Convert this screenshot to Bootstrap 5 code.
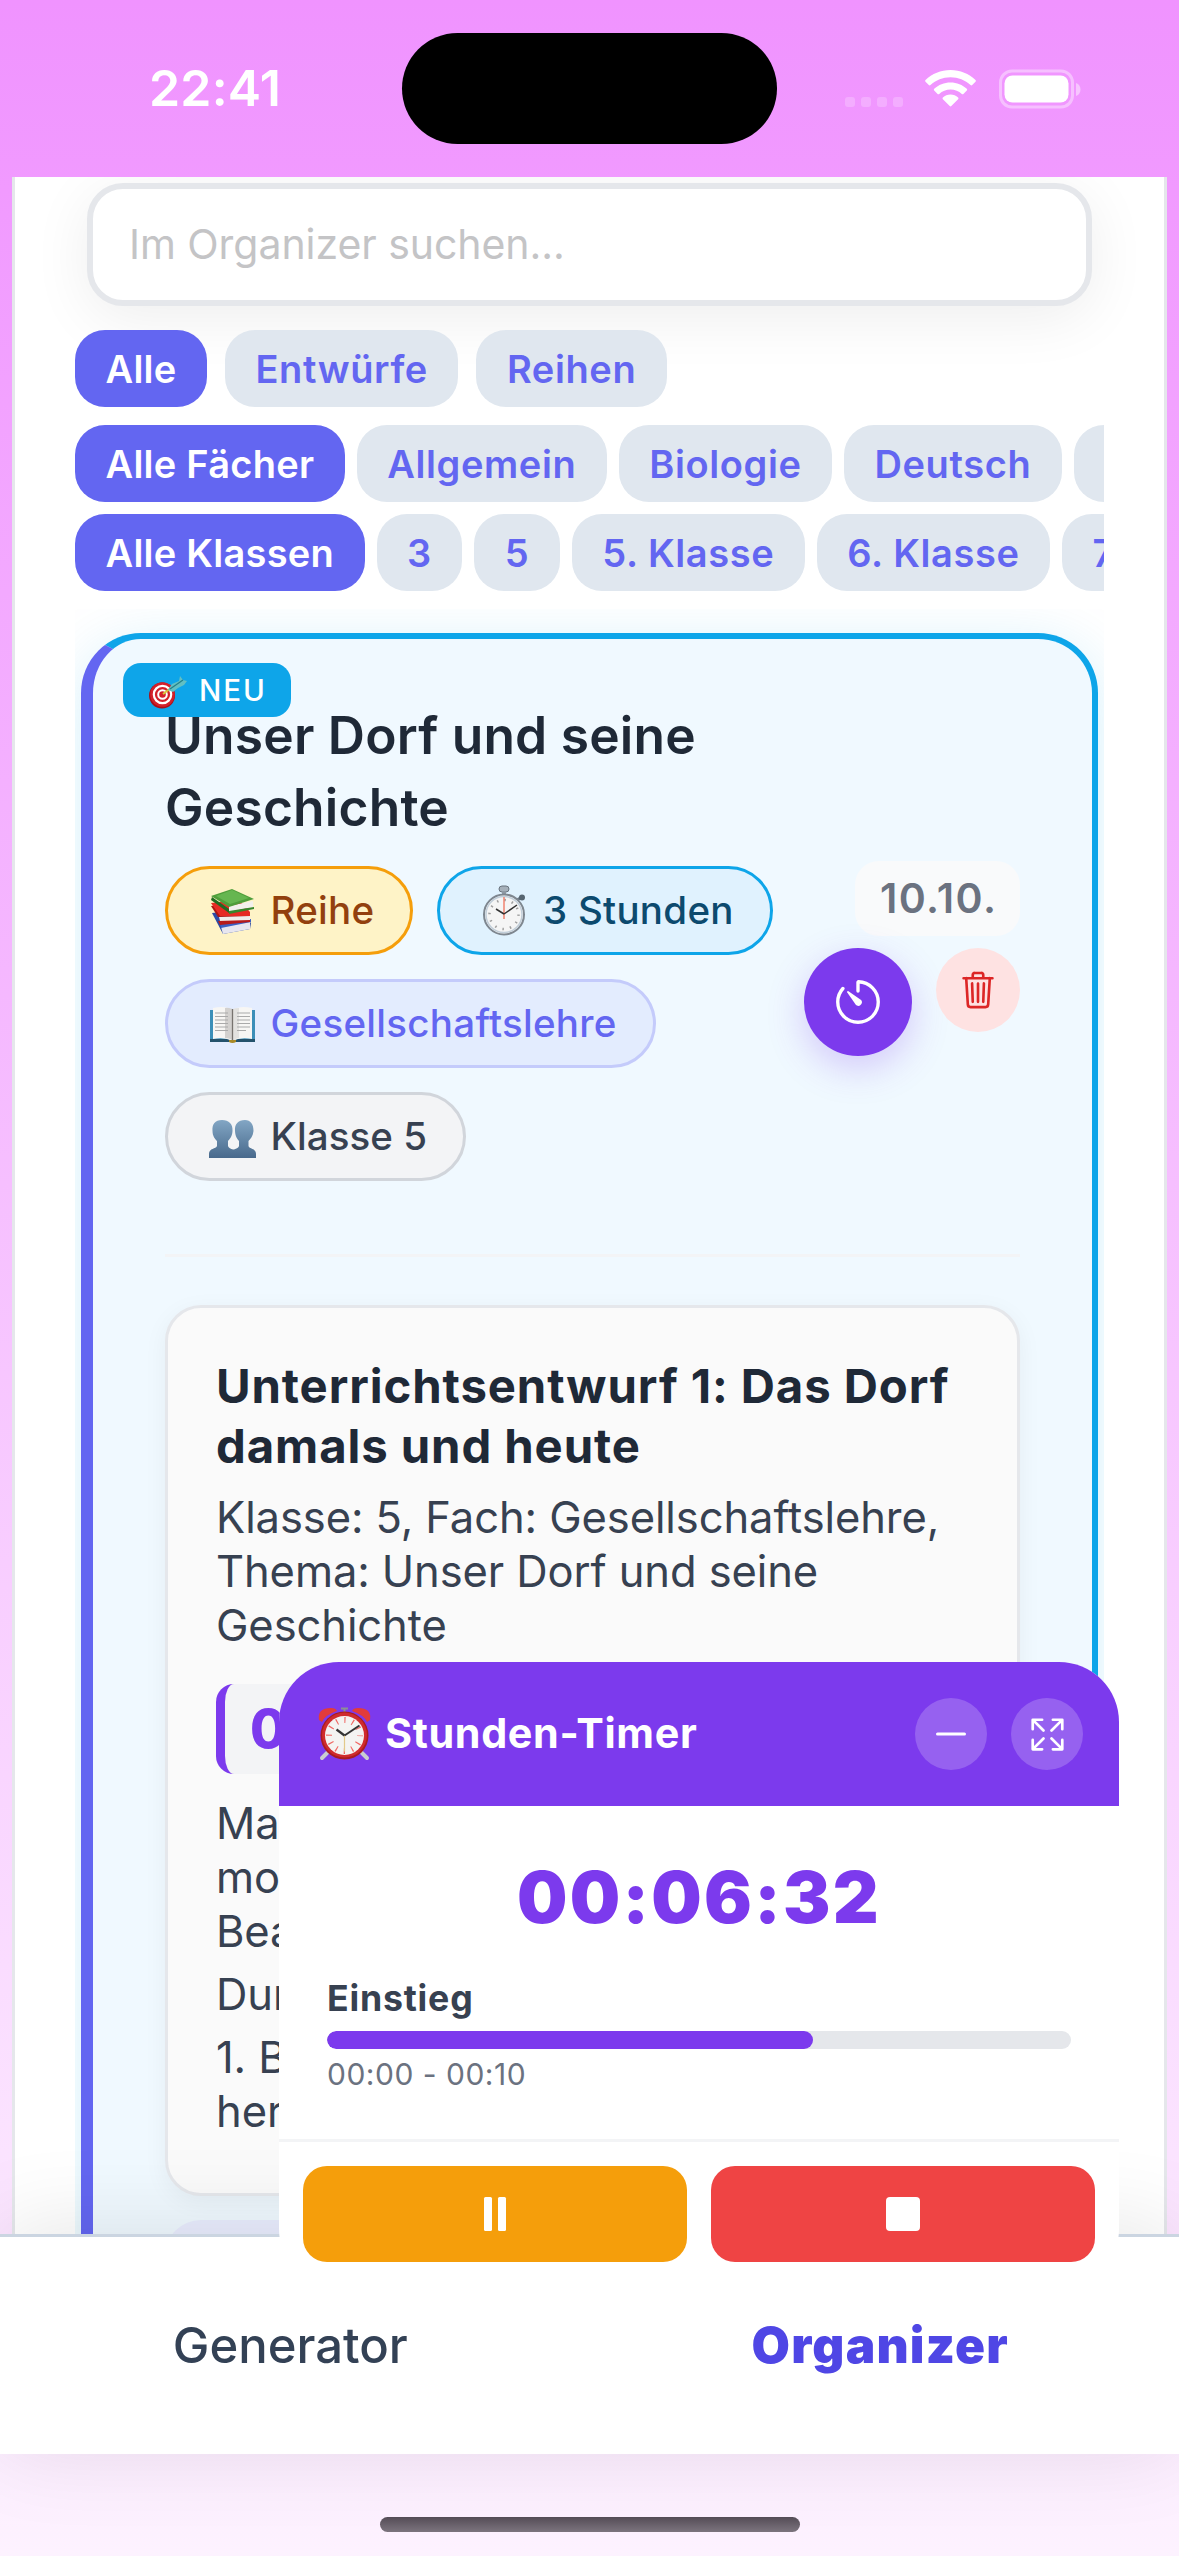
<!DOCTYPE html>
<html lang="de">
<head>
<meta charset="utf-8">
<meta name="viewport" content="width=device-width, initial-scale=1">
<title>Organizer</title>
<link rel="stylesheet" href="https://cdn.jsdelivr.net/npm/bootstrap@5.3.0/dist/css/bootstrap.min.css">
<style>
  html, body { height: 2556px; overflow: hidden; }
  body { font-family: Inter, "Liberation Sans", sans-serif; color: #374151; line-height: 1;
         background: linear-gradient(180deg, #f093ff 0%, #fdf2ff 100%); white-space: nowrap; }
  svg { display: block; flex: none; overflow: visible; }

  /* status bar */
  .status { height: 177px; padding: 0 98px 0 149px; }
  .clock { font-size: 50px; font-weight: 600; letter-spacing: .2px; width: 253px; line-height: 176px; }
  .island { width: 375px; height: 111px; border-radius: 56px; margin-top: 33px; }
  .signals { height: 177px; }
  .dots { gap: 6px; padding-top: 26px; margin-left: 1px; }
  .dot { width: 10px; height: 10px; border-radius: 3px; background: rgba(255,255,255,.22); }
  .wifi { margin-left: 22px; }
  .battery { margin-left: 23px; }

  /* page panel */
  .panel { margin: 0 12px; height: 2057px; border: 3px solid #e5e7eb; border-width: 0 3px; padding: 6px 60px 0; overflow: hidden; }
  .search { height: 123px; margin: 0 12px; border: 6px solid #e5e7eb; border-radius: 36px; padding: 0 36px; background: #fff;
            font-size: 41px; letter-spacing: -.05px; line-height: 111px; color: #c4c4c6; box-shadow: 0 12px 60px rgba(0,0,0,.07); }
  .chips { height: 77px; overflow: hidden; gap: 12px; margin-top: 12px; }
  .chips-type { gap: 18px; margin-top: 24px; }
  .chips-subject { margin-top: 18px; }
  .chip { flex: none; height: 77px; border-radius: 30px; padding: 0 30.5px; background: #e0e7ef; color: #6366f1;
          font-size: 38px; font-weight: 600; letter-spacing: .6px; line-height: 78px; }
  .chip.on { background: #6366f1; color: #fff; letter-spacing: .25px; }

  /* organizer list */
  .feed { margin-top: 18px; padding: 24px 6px 0; height: 1700px; overflow: hidden; }
  .entry { position: relative; height: 1900px; background: #f0f9ff; border: 6px solid #0ea5e9; border-left: 12px solid #6366f1;
           border-radius: 60px; padding: 60px 72px 0; box-shadow: 0 12px 60px rgba(14,165,233,.17); }
  .flag { position: absolute; left: 30px; top: 24px; width: 168px; height: 54px; border-radius: 18px; background: #0ea5e9; color: #fff;
          font-size: 29.5px; font-weight: 500; letter-spacing: 2px; line-height: 54px; padding-left: 26px; gap: 11px; }
  .flag svg { margin-top: 5px; }
  .entry-title { font-size: 51.5px; font-weight: 600; letter-spacing: .2px; line-height: 72px; color: #1f2937; width: 610px; white-space: normal; }
  .pills { width: 630px; margin-top: 23px; }
  .pill { height: 89px; border: 3px solid; border-radius: 45px; padding: 0 36px 0 37px; font-size: 38.5px; font-weight: 500; letter-spacing: .28px; }
  .pill svg { margin-right: 10px; margin-left: -.5px; }
  .p-reihe { background: #fef3c7; border-color: #f59e0b; color: #92400e; }
  .p-zeit { background: #e0f2fe; border-color: #0ea5e9; color: #0c4a6e; }
  .p-fach { background: #e3ecfe; border-color: #c4cbfb; color: #6366f1; }
  .p-klasse { background: #f3f4f6; border-color: #d1d5db; color: #374151; letter-spacing: .05px; }
  .side { width: 225px; padding-top: 162px; }
  .date { width: 165px; height: 75px; border-radius: 24px; background: #f9fafb; color: #6b7280; font-size: 41px; font-weight: 600;
          letter-spacing: 1.4px; line-height: 75px; padding-left: 25px; margin-bottom: 12px; }
  .b-timer { width: 108px; height: 108px; background: #7c3aed; box-shadow: 0 12px 36px rgba(124,58,237,.25); }
  .b-trash { width: 84px; height: 84px; background: #fee2e2; }
  .rule { height: 3px; background: #f3f4f6; margin: 73px 0 48px; }
  .plan { height: 891px; border: 3px solid #e5e7eb; border-radius: 36px; background: #fafafa; padding: 48px 48px 0; box-shadow: 0 6px 24px rgba(0,0,0,.05); }
  .plan h2 { font-size: 47.3px; font-weight: 700; letter-spacing: .9px; line-height: 60px; color: #1f2937; margin: 0 0 14px; }
  .plan p { font-size: 43.5px; letter-spacing: -.09px; line-height: 54px; margin: 0 0 9px; }
  .slot { height: 90px; width: 700px; margin: 32px 0 22px; border-left: 9px solid #7c3aed; border-radius: 18px; background: #f3f4f6; color: #7c3aed;
          font-size: 53px; font-weight: 800; line-height: 91px; padding-left: 25px; }
  .plan-next { height: 300px; margin-top: 24px; border-radius: 36px; background: rgba(139,92,246,.07); }

  /* floating timer */
  .timer { position: fixed; left: 279px; top: 1662px; width: 840px; height: 627px; border-radius: 60px; background: #fff; overflow: hidden; z-index: 20; }
  .timer-head { height: 144px; background: #7c3aed; color: #fff; padding: 0 36px 0 38px; }
  .timer-head strong { font-size: 41.3px; font-weight: 700; letter-spacing: .65px; margin-left: 13px; }
  .round { width: 72px; height: 72px; background: rgba(255,255,255,.2); }
  .timer-body { height: 336px; padding: 48px 48px 0; border-bottom: 3px solid #f3f4f6; }
  .digits { font-size: 71px; font-weight: 900; letter-spacing: 2.3px; line-height: 86px; color: #7c3aed; }
  .phase { font-size: 35.7px; font-weight: 700; letter-spacing: .8px; line-height: 42px; margin: 37px 0 12px; }
  .meter { height: 18px; border-radius: 9px; background: #e5e7eb; }
  .meter .progress-bar { background: #7c3aed; border-radius: 9px; }
  .span { font-size: 30px; letter-spacing: .5px; line-height: 36px; color: #6b7280; margin-top: 7px; }
  .act { height: 96px; border-radius: 24px; }
  .act-pause { background: #f59e0b; }
  .act-stop { background: #ef4444; }

  /* bottom navigation */
  .tabs { position: relative; z-index: 10; height: 220px; background: #fff; border-top: 3px solid #cbd5e1;
          box-shadow: 0 -6px 90px rgba(0,0,0,.1); font-size: 49px; }
  .tabs a { padding-right: 9px; font-weight: 500; color: #334155; }
  .tabs a.current { font-size: 49.6px; font-weight: 900; letter-spacing: 1.2px; color: #4f46e5; padding-right: 8px; }
  .home-bar { width: 420px; height: 15px; border-radius: 8px; background: linear-gradient(#544c56, #7c747e); margin: 63px auto 0; position: relative; z-index: 11; }
</style>
</head>
<body>

<header class="status d-flex align-items-start">
  <div class="clock text-white">22:41</div>
  <div class="island bg-black"></div>
  <div class="signals d-flex align-items-center ms-auto">
    <div class="dots d-flex">
      <span class="dot"></span><span class="dot"></span><span class="dot"></span><span class="dot"></span>
    </div>
    <svg class="wifi" width="51" height="37" viewBox="0 0 51 37" fill="#fff">
      <path d="M25.500 0C35.200 0 44 3.800 50.500 10c.5.500.5 1.200 0 1.700l-3.300 3.300c-.5.500-1.200.5-1.700 0C40.200 10.200 33.200 7.300 25.500 7.300S10.800 10.200 5.500 15c-.5.500-1.200.5-1.700 0L.5 11.700c-.5-.5-.5-1.200 0-1.700C7 3.800 15.800 0 25.500 0z"/>
      <path d="M25.500 12.400c6.300 0 12 2.400 16.300 6.400.5.500.5 1.200 0 1.700l-3.400 3.400c-.4.400-1.100.4-1.600 0-3-2.700-6.900-4.300-11.300-4.300s-8.300 1.600-11.300 4.300c-.5.400-1.200.4-1.600 0l-3.400-3.400c-.5-.5-.5-1.200 0-1.700 4.300-4 10-6.400 16.300-6.400z"/>
      <path d="M25.500 24.600c2.900 0 5.600 1.100 7.600 2.900.5.500.5 1.200 0 1.700l-6.800 6.900c-.4.500-1.200.5-1.600 0l-6.800-6.900c-.5-.5-.5-1.200 0-1.700 2-1.800 4.700-2.900 7.600-2.900z"/>
    </svg>
    <svg class="battery" width="82" height="38" viewBox="0 0 82 38">
      <rect x="1.500" y="1" width="72" height="36" rx="11.500" fill="none" stroke="#fff" stroke-opacity=".4" stroke-width="3"/>
      <rect x="5.500" y="5.500" width="64" height="27" rx="8" fill="#fff"/>
      <path d="M77 13c3 1 4.500 3.600 4.500 6.500S80 25 77 26z" fill="#fff" fill-opacity=".45"/>
    </svg>
  </div>
</header>

<main class="panel bg-white">
  <div class="search">Im Organizer suchen...</div>
  <div class="chips chips-type d-flex position-relative">
    <div class="chip on">Alle</div><div class="chip">Entwürfe</div><div class="chip">Reihen</div>
  </div>
  <div class="chips chips-subject d-flex">
    <div class="chip on">Alle Fächer</div><div class="chip">Allgemein</div><div class="chip">Biologie</div><div class="chip">Deutsch</div><div class="chip">&nbsp;&nbsp;&nbsp;&nbsp;</div>
  </div>
  <div class="chips d-flex">
    <div class="chip on">Alle Klassen</div><div class="chip">3</div><div class="chip">5</div><div class="chip">5. Klasse</div><div class="chip">6. Klasse</div><div class="chip">7</div>
  </div>

  <section class="feed">
    <article class="entry">
      <div class="d-flex">
        <div class="w-100">
          <h1 class="entry-title mb-0">Unser Dorf und seine Geschichte</h1>
          <div class="pills d-flex flex-wrap gap-4">
            <span class="pill p-reihe d-flex align-items-center">
              <svg width="56" height="50" viewBox="-4 0 52 50">
                <path d="M1 27l26-3 13 13-1 6-27 5z" fill="#2b4aa6"/><path d="M10 41l29-6v8l-27 5z" fill="#e8e6ef"/><path d="M9 38l31-5v3l-30 6z" fill="#3b60c4"/>
                <path d="M0 20l28-4 11 11v4H7z" fill="#a91414"/><path d="M0 17l9 13h30v-4L28 14z" fill="#e62a24"/><path d="M8 31l31-1v5H9z" fill="#f1edea"/><path d="M7 35l32-1v2l-30 3z" fill="#b71a1a"/>
                <path d="M1 11l17 12v4L0 14z" fill="#1f6b22"/><path d="M18 20l24-5v6l-24 5z" fill="#f3f0ec"/><path d="M0 10L21 3l22 10-25 8z" fill="#4f9e3b"/><path d="M5 10L21 4l17 8-19 6z" fill="#66b650"/><path d="M18 25l25-4v2l-25 5z" fill="#37862c"/>
              </svg>Reihe</span>
            <span class="pill p-zeit d-flex align-items-center">
              <svg width="56" height="50" viewBox="0 0 56 50">
                <rect x="22" y="0" width="10" height="6" rx="3" fill="#a5b0ba" stroke="#68737d"/><path d="M25 5h4v6h-4z" fill="#8e99a4"/><path d="M40 14l5-3" stroke="#6d7a86" stroke-width="3"/><circle cx="45" cy="11.500" r="3" fill="#566571"/>
                <circle cx="27" cy="28.500" r="20" fill="#f5f5f5" stroke="#7e8790" stroke-width="2"/><circle cx="27" cy="28.500" r="18" fill="none" stroke="#c1ced9" stroke-width="1.500"/>
                <circle cx="27" cy="28.500" r="14.500" fill="none" stroke="#a0a0a0" stroke-width="2.500" stroke-dasharray="1.500 6.092"/>
                <path d="M27 11v22" stroke="#f0705a" stroke-width="1.300"/><path d="M27 28l-8-5M27 28l13-9" stroke="#333" stroke-width="1.500"/>
              </svg>3 Stunden</span>
            <span class="pill p-fach d-flex align-items-center">
              <svg width="56" height="50" viewBox="0 0 56 50">
                <rect x="5" y="11" width="45" height="32" fill="#3c8fb8"/><path d="M5 40h45v3H5z" fill="#24526c"/>
                <path d="M8 9q12-3 19.500 2Q35 6 47 9v31q-12-2-19.500 2Q20 38 8 40z" fill="#f7f6f4"/>
                <path d="M27.500 10Q22 8 20 9v30q5 0 7.500 2.500Z" fill="#d3d1cf"/><path d="M28 10v32q3-3 6-3V9q-4 0-6 1z" fill="#e3e2e0"/><path d="M27.500 10v32" stroke="#77736f" stroke-width="1.300"/>
                <path d="M10 14h13M10 17.500h13M10 21h13M10 24.500h13M10 28h13M10 31.500h13M32 14h13M32 17.500h13M32 21h13M32 24.500h13M32 28h13M32 31.500h9" stroke="#aaa" stroke-width="1.200"/>
                <path d="M24 41h7v2q-3.500 2-7 0z" fill="#a98a27"/>
              </svg>Gesellschaftslehre</span>
            <span class="pill p-klasse d-flex align-items-center">
              <svg width="56" height="50" viewBox="0 0 56 50">
                <defs><linearGradient id="bust" x2="0" y2="1"><stop stop-color="#82a6c4"/><stop offset="1" stop-color="#48698c"/></linearGradient></defs>
                <path fill="url(#bust)" d="M17 8c7 0 11 4 10.500 11-.3 6-3 8-4.500 10v5c1 4 9 3 11 7v5H4v-4c0-6 7-5 8-8v-5c-2-2-4.500-5-4.500-10C7 12 10 8 17 8z"/>
                <path fill="url(#bust)" d="M40 8c-7 0-10.500 4-10 11 .3 6 2.500 8 4 10v5c-1 3-5 3-6 4 4 1 6 4 6 8h17v-4c0-6-7-5-7.500-8v-5c2-2 4.500-5 5-10 0-7-3-11-8.500-11z"/>
              </svg>Klasse 5</span>
          </div>
        </div>
        <div class="side d-flex flex-column align-items-end flex-shrink-0">
          <div class="date">10.10.</div>
          <div class="d-flex gap-4">
            <div class="b-timer rounded-circle d-flex align-items-center justify-content-center">
              <svg width="54" height="54" viewBox="0 0 512 512"><path fill="none" stroke="#fff" stroke-width="32" stroke-linecap="round" stroke-linejoin="round" d="M112.910 128A191.850 191.850 0 0064 254c-1.180 106.350 85.650 193.800 192 194 106.200.2 192-85.830 192-192 0-104.540-83.550-189.610-187.500-192a4.360 4.360 0 00-4.500 4.370V152"/><path fill="#fff" d="M233.380 278.630l-79-113a8.130 8.130 0 0111.320-11.320l113 79a32.500 32.500 0 01-37.250 53.260 33.210 33.210 0 01-8.070-7.940z"/></svg>
            </div>
            <div class="b-trash rounded-circle d-flex align-items-center justify-content-center">
              <svg width="42" height="42" viewBox="0 0 512 512" fill="none" stroke="#dc2626" stroke-width="32" stroke-linecap="round" stroke-linejoin="round"><path d="M112 112l20 320c.95 18.490 14.400 32 32 32h184c17.670 0 30.870-13.510 32-32l20-320M80 112h352M192 112V72a23.930 23.930 0 0124-24h80a23.930 23.930 0 0124 24v40M256 176v224M184 176l8 224M328 176l-8 224"/></svg>
            </div>
          </div>
        </div>
      </div>
      <div class="rule"></div>

      <section class="plan">
        <h2>Unterrichtsentwurf 1: Das Dorf<br>damals und heute</h2>
        <p>Klasse: 5, Fach: Gesellschaftslehre,<br>Thema: Unser Dorf und seine<br>Geschichte</p>
        <div class="slot">0</div>
        <p>Ma<br>mo<br>Bea</p>
        <p>Dur</p>
        <p>1. B<br>her</p>
      </section>
      <section class="plan-next"></section>
      <span class="flag d-flex align-items-center">
        <svg width="39" height="34" viewBox="0 0 39 34">
          <circle cx="13" cy="19.500" r="13" fill="#a80f18"/><circle cx="13.500" cy="18.500" r="12.300" fill="#d3202a"/><circle cx="13.500" cy="18.500" r="8.700" fill="none" stroke="#fff" stroke-width="2.200"/><circle cx="13.500" cy="18.500" r="4.300" fill="none" stroke="#fff" stroke-width="2"/>
          <path d="M14 18l12-9" stroke="#d5c83a" stroke-width="2"/><path d="M19 14l4-6 7-3 1-5 3 4 4 1-3 4-6 3-5 4z" fill="#62bfc2"/><path d="M21 13L34 4" stroke="#237f86" stroke-width="1.200"/>
        </svg>NEU</span>
    </article>
  </section>
</main>

<nav class="tabs d-flex text-center align-items-center">
  <a class="w-50 text-decoration-none">Generator</a>
  <a class="w-50 text-decoration-none current">Organizer</a>
</nav>
<div class="home-bar"></div>

<aside class="timer">
  <div class="timer-head d-flex align-items-center">
    <svg width="55" height="54" viewBox="0 0 55 54">
      <path d="M10 46l-5 5M45 46l5 5" stroke="#c9cdd0" stroke-width="4" stroke-linecap="round"/>
      <path d="M2 13Q0 1 14 1q5 0 6 3Q8 8 5 15z" fill="#e23b3b"/><path d="M53 13Q55 1 41 1q-5 0-6 3 12 4 15 11z" fill="#e23b3b"/>
      <path d="M24 1.500h7M27.500 1v5" stroke="#8c8f94" stroke-width="2"/>
      <circle cx="27.500" cy="28.500" r="24" fill="#a91c1f"/><circle cx="27.500" cy="28" r="22.500" fill="#cf2b2d"/><circle cx="27.500" cy="28.500" r="19.500" fill="#f4f4f2"/>
      <circle cx="27.500" cy="28.500" r="15.500" fill="none" stroke="#f06a66" stroke-width="6" stroke-dasharray="1.200 6.915" stroke-dashoffset=".6"/>
      <path d="M27.500 28.500v16" stroke="#e2c98a" stroke-width="1.200"/><path d="M27.500 28.500l-8-6" stroke="#333" stroke-width="2.200"/><path d="M27.500 28.500l15-10" stroke="#333" stroke-width="2"/>
    </svg>
    <strong>Stunden-Timer</strong>
    <div class="d-flex gap-4 ms-auto">
      <span class="round rounded-circle d-flex align-items-center justify-content-center">
        <svg width="48" height="48" viewBox="0 0 512 512"><path stroke="#fff" stroke-width="32" stroke-linecap="round" d="M400 256H112"/></svg></span>
      <span class="round rounded-circle d-flex align-items-center justify-content-center">
        <svg width="43" height="43" viewBox="0 0 512 512" fill="none" stroke="#fff" stroke-width="32" stroke-linecap="round" stroke-linejoin="round"><path d="M432 320v112H320M421.800 421.770L304 304M80 192V80h112M90.200 90.230L208 208M320 80h112v112M421.770 90.200L304 208M192 432H80V320M90.230 421.800L208 304"/></svg></span>
    </div>
  </div>
  <div class="timer-body">
    <div class="digits text-center">00:06:32</div>
    <div class="phase">Einstieg</div>
    <div class="meter progress"><div class="progress-bar" style="width:65.3%"></div></div>
    <div class="span">00:00 - 00:10</div>
  </div>
  <div class="d-flex gap-4 p-4">
    <div class="act act-pause w-50 d-flex align-items-center justify-content-center">
      <svg width="22" height="34" viewBox="0 0 22 34" fill="#fff"><rect width="8" height="34" rx="1.500"/><rect x="14" width="8" height="34" rx="1.500"/></svg></div>
    <div class="act act-stop w-50 d-flex align-items-center justify-content-center">
      <svg width="34" height="34" viewBox="0 0 34 34" fill="#fff"><rect width="34" height="34" rx="4"/></svg></div>
  </div>
</aside>

</body>
</html>
